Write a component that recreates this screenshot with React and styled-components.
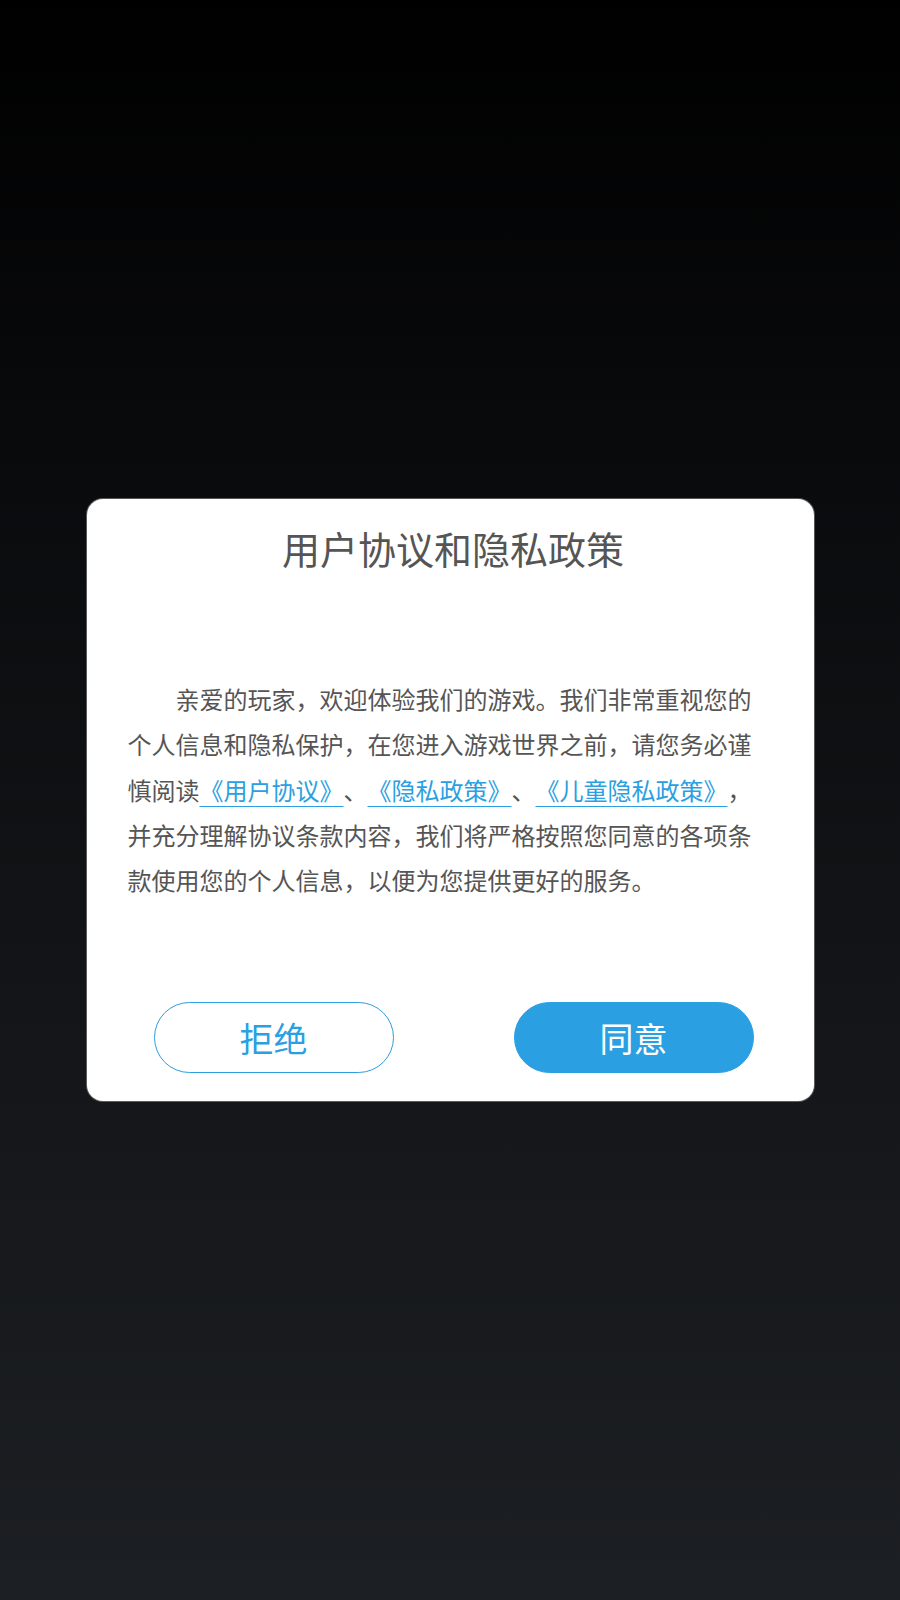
import styled, { createGlobalStyle } from "styled-components";

const GlobalStyle = createGlobalStyle`
  html, body {
    margin: 0;
    padding: 0;
  }
  body {
    font-family: "Noto Sans CJK SC", "Noto Sans", sans-serif;
    text-spacing-trim: space-all;
    font-kerning: none;
    font-feature-settings: "chws" 0, "halt" 0, "palt" 0, "kern" 0;
  }
`;

const Screen = styled.div`
  width: 900px;
  height: 1600px;
  display: flex;
  justify-content: center;
  align-items: flex-start;
  padding-top: 499px;
  box-sizing: border-box;
  background: linear-gradient(to bottom, #000000 0%, #0a0b0d 30%, #15171a 70%, #1c1f23 100%);
`;

const Dialog = styled.div`
  width: 727px;
  height: 602px;
  box-sizing: border-box;
  background: #ffffff;
  border-radius: 16px;
  box-shadow: 0 0 0 1px rgba(140, 140, 140, 0.6);
  display: flex;
  flex-direction: column;
  padding: 24px 0 28px;
`;

const Title = styled.h1`
  margin: 0;
  padding-left: 6px;
  font-size: 38px;
  font-weight: 400;
  line-height: 50px;
  color: #555555;
  text-align: center;
`;

const Body = styled.p`
  margin: 103px 0 0 41px;
  width: 626px;
  font-size: 24px;
  line-height: 45.3px;
  color: #555555;
  text-indent: 2em;
  text-align: left;
  text-spacing-trim: space-all;
`;

const DocLink = styled.a`
  color: #2a9fe2;
  text-decoration: underline;
  text-underline-offset: 6px;
  text-decoration-thickness: 1px;
`;

const Actions = styled.div`
  margin-top: auto;
  display: flex;
  gap: 120px;
  padding-left: 67px;
`;

const Button = styled.button`
  width: 240px;
  height: 71px;
  border-radius: 36px;
  box-sizing: border-box;
  font-family: inherit;
  font-size: 34px;
  line-height: 1;
  padding: 0;
  cursor: pointer;
  border: 1px solid #2a9fe2;
  background: ${(p) => (p.$primary ? "#2aa0e2" : "#ffffff")};
  color: ${(p) => (p.$primary ? "#ffffff" : "#2a9fe2")};
`;

const App = () => {
  return (
    <Screen>
      <GlobalStyle />
      <Dialog>
        <Title>用户协议和隐私政策</Title>
        <Body>
          亲爱的玩家，欢迎体验我们的游戏。我们非常重视您的个人信息和隐私保护，在您进入游戏世界之前，请您务必谨慎阅读
          <DocLink>《用户协议》</DocLink>、<DocLink>《隐私政策》</DocLink>、
          <DocLink>《儿童隐私政策》</DocLink>
          ，并充分理解协议条款内容，我们将严格按照您同意的各项条款使用您的个人信息，以便为您提供更好的服务。
        </Body>
        <Actions>
          <Button>拒绝</Button>
          <Button $primary>同意</Button>
        </Actions>
      </Dialog>
    </Screen>
  );
};

export default App;
